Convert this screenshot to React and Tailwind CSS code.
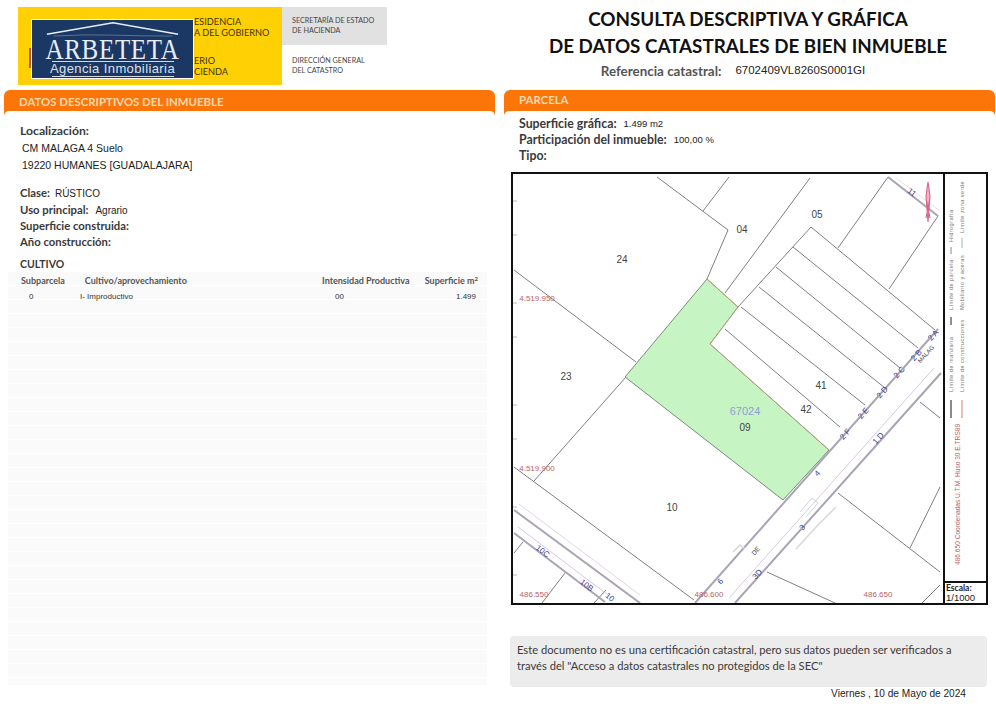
const lato = "font-['Lato','Open_Sans',sans-serif]";
const arial = "font-['Liberation_Sans',Arial,sans-serif]";

const thin = [
  [657, 177, 728, 230], [703, 211, 729, 177], [728, 230, 707, 279],
  [514, 270, 636, 362], [725, 293, 810, 178],
  [811, 227, 738, 307], [811, 227, 935, 330], [793, 247, 918, 348],
  [776, 267, 900, 368], [759, 287, 885, 388], [741, 307, 865, 405],
  [725, 329, 840, 427], [888, 177, 838, 248], [938, 216, 889, 289],
  [534, 481, 626, 377], [514, 467, 694, 600],
  [920, 402, 940, 418], [838, 493, 940, 572], [940, 487, 910, 548],
  [767, 572, 835, 603], [940, 585, 922, 603],
  [514, 553, 523, 542], [542, 603, 565, 573], [594, 603, 606, 590],
];

const streets = [
  [938, 329, 695, 603],
  [941, 373, 735, 603],
  [514, 510, 640, 603],
  [514, 533, 605, 602],
  [888, 177, 938, 216],
];

const parcelLabels = [
  ["04", 742, 233], ["05", 817, 218], ["24", 622, 263], ["23", 566, 380],
  ["41", 821, 389], ["42", 806, 413], ["09", 745, 431], ["10", 672, 511],
];

const coords = [
  ["4.519.950", 537, 301], ["4.519.900", 537, 471],
  ["486.550", 534, 597], ["486.600", 709, 597], ["486.650", 878, 597],
];

const numbers = [
  ["11", 912, 195], ["2 A", 933, 338], ["2 B", 916, 358], ["2 C", 899, 375],
  ["2 D", 882, 395], ["2 E", 863, 416], ["2 F", 845, 437], ["4", 817, 476],
  ["1 D", 878, 441], ["3", 802, 530], ["3D", 757, 577], ["6", 720, 584],
  ["10C", 543, 554], ["10B", 587, 588], ["10", 610, 600],
];

const legend = [
  ["Límite de manzana", 953, 392], ["Límite de parcela", 953, 310], ["Hidrografía", 953, 242],
  ["Límite de construcciones", 964, 392], ["Mobiliario y aceras", 964, 310], ["Límite zona verde", 964, 233],
];

function CadastralMap() {
  return (
    <svg viewBox="513 174 430 429" className="block h-full w-full">
      {thin.map(([x1, y1, x2, y2], i) => (
        <line key={i} x1={x1} y1={y1} x2={x2} y2={y2} stroke="#484848" strokeWidth="0.7" />
      ))}
      <polygon
        points="707,279 738,307 710,344 829,450 783,500 625,377"
        fill="#c6f5c3"
        stroke="#4d5d4d"
        strokeWidth="0.7"
      />
      <polyline points="707,279 738,307 710,344 829,450" fill="none" stroke="#c9a27c" strokeWidth="0.7" />
      {streets.map(([x1, y1, x2, y2], i) => (
        <line key={i} x1={x1} y1={y1} x2={x2} y2={y2} stroke="#a9a4b4" strokeWidth="2" />
      ))}
      <line x1="934" y1="368" x2="729" y2="598" stroke="#d9c8e4" strokeWidth="1" />
      <line x1="519" y1="504" x2="640" y2="595" stroke="#e3d3ea" strokeWidth="1" />
      <line x1="518" y1="527" x2="612" y2="598" stroke="#d9c8e4" strokeWidth="1" />
      <line x1="896" y1="178" x2="940" y2="211" stroke="#d8d8d8" strokeWidth="0.7" />
      <polyline points="800,512 812,498 818,503 806,517" fill="none" stroke="#d4d4d4" strokeWidth="1" />
      <polyline points="796,549 818,525 836,507" fill="none" stroke="#d8d8d8" strokeWidth="1.5" />
      <polyline points="733,552 740,545 745,549" fill="none" stroke="#d8d8d8" strokeWidth="1.5" />
      <path d="M928 182 L930 196 L928 222 L926 196 Z M926 218 L930 198 M930 218 L926 198" fill="#efb6c9" stroke="#d9648a" strokeWidth="1.1" />
      {[201, 235, 303, 337, 405, 439, 507, 575].map((y) => (
        <line key={y} x1="513" y1={y} x2="517" y2={y} stroke="#aaa" strokeWidth="0.8" />
      ))}
      <g fontFamily="Liberation Sans, Arial, sans-serif">
        {parcelLabels.map(([t, x, y]) => (
          <text key={t} x={x} y={y} textAnchor="middle" fontSize="10" fill="#444">{t}</text>
        ))}
        <text x="745" y="415" textAnchor="middle" fontSize="11" fill="#8e9ed0">67024</text>
        {coords.map(([t, x, y]) => (
          <text key={t} x={x} y={y} textAnchor="middle" fontSize="8" fill="#b8646a">{t}</text>
        ))}
        {numbers.map(([t, x, y]) => (
          <text key={t + x} x={x} y={y} textAnchor="middle" fontSize="8" fill="#3b3f96" transform={`rotate(${t === "11" || t.startsWith("10") ? 38 : -48} ${x} ${y - 3})`}>{t}</text>
        ))}
        <text x="926" y="356" textAnchor="middle" fontSize="6" fill="#444" transform="rotate(-48 926 354)">MALAG</text>
        <text x="756" y="553" textAnchor="middle" fontSize="6.5" fill="#444" transform="rotate(-48 756 551)">DE</text>
      </g>
    </svg>
  );
}

function Legend() {
  return (
    <svg viewBox="945 174 41 407" className="block h-full w-full">
      <g fontFamily="Liberation Sans, Arial, sans-serif" fontSize="5.6" fill="#777" textLength="0">
        {legend.map(([t, x, y]) => (
          <text key={t} x={x} y={y} fontSize="5.6" letterSpacing="0.45" transform={`rotate(-90 ${x} ${y})`}>{t}</text>
        ))}
        <text x="960" y="565" fontSize="6.6" fill="#b8646a" transform="rotate(-90 960 565)">486.650 Coordenadas U.T.M. Huso 30 E.TRS89</text>
      </g>
      <line x1="951" y1="400" x2="951" y2="418" stroke="#8a8a8a" strokeWidth="2" />
      <line x1="951" y1="317" x2="951" y2="325" stroke="#222" strokeWidth="1" />
      <line x1="951" y1="247" x2="951" y2="254" stroke="#8a8a8a" strokeWidth="1" />
      <line x1="962" y1="400" x2="962" y2="418" stroke="#c9866a" strokeWidth="1" />
      <line x1="962" y1="238" x2="962" y2="248" stroke="#9ab99a" strokeWidth="1" />
    </svg>
  );
}

function Logo() {
  return (
    <div className="absolute left-[13px] top-[12px] flex h-[60px] w-[163px] flex-col items-center border border-white bg-[#1b3763]">
      <svg viewBox="0 0 161 18" className="h-[17px] w-full shrink-0">
        <polyline points="11,15 81,3 150,15" fill="none" stroke="#e8edf3" strokeWidth="1.6" />
        <path d="M18 17 Q50 15 81 16 T144 17" fill="none" stroke="#8fa0b8" strokeWidth="0.6" />
      </svg>
      <div className="h-[24px] scale-y-[1.2] text-[25px] leading-[24px] tracking-[0.7px] text-[#e9eef5] font-['Liberation_Serif',serif]">ARBETETA</div>
      <div className="h-px w-[122px] bg-[#d4dae4]" />
      <div className={`${arial} h-[14px] text-[13px] leading-[14px] tracking-[0.4px] text-[#dbe2ec]`}>Agencia Inmobiliaria</div>
      <div className="h-px w-[122px] bg-[#d4dae4]" />
    </div>
  );
}

function PanelHead({ title, className = "" }) {
  return (
    <div className="flex h-[26px] shrink-0 flex-col rounded-t-[6px] bg-[#fb7508]">
      <div className={`${lato} flex h-[21px] items-center pl-[15px] text-[11.4px] font-bold text-[#fbd9ae] ${className}`}>
        {title}
      </div>
      <div className="h-[5px] rounded-t-[5px] bg-white" />
    </div>
  );
}

function Label({ children, className = "text-[11.3px]" }) {
  return <span className={`${lato} font-bold text-[#3a3a3a] ${className}`}>{children}</span>;
}

function Value({ children, className = "text-[10px]" }) {
  return <span className={`${arial} text-[#222] ${className}`}>{children}</span>;
}

function Row({ children, className = "h-[16px]", gap = "gap-[5px]" }) {
  return <div className={`flex items-center whitespace-nowrap ${gap} ${className}`}>{children}</div>;
}

export default function App() {
  return (
    <div className="flex h-[709px] w-[996px] flex-col overflow-hidden bg-white">
      <header className="flex h-[90px] shrink-0">
        <div className="flex w-[500px] shrink-0 pl-[18px] pt-[7px]">
          <div className={`${lato} relative flex h-[78px] w-[264px] flex-col bg-[#ffd105] pl-[176px] pt-[9px] text-[9.2px] leading-[11px] text-[#3d3300]`}>
            <div>ESIDENCIA</div>
            <div className="whitespace-nowrap">A DEL GOBIERNO</div>
            <div className="mt-[17px]">ERIO</div>
            <div>CIENDA</div>
            <div className="absolute left-[11px] top-[41px] h-[20px] w-[2px] bg-[#c8501e]" />
            <Logo />
          </div>
          <div className={`${lato} w-[105px] text-[7.2px] leading-[10px] text-[#444]`}>
            <div className="flex h-[38px] items-center bg-[#e1e1e1] pl-[10px]">
              <div>SECRETARÍA DE ESTADO<br />DE HACIENDA</div>
            </div>
            <div className="pl-[10px] pt-[11px]">DIRECCIÓN GENERAL<br />DEL CATASTRO</div>
          </div>
        </div>
        <div className={`${lato} flex-1 pt-[6px] text-center font-bold text-[#111]`}>
          <div className="text-[18.8px] leading-[25px]">CONSULTA DESCRIPTIVA Y GRÁFICA</div>
          <div className="text-[18.8px] leading-[29px]">DE DATOS CATASTRALES DE BIEN INMUEBLE</div>
          <div className="mt-[3px] flex h-[16px] items-center justify-center gap-[14px] pr-[30px]">
            <span className="text-[13.4px] text-[#555]">Referencia catastral:</span>
            <span className={`${arial} text-[11.5px] font-normal text-[#222]`}>6702409VL8260S0001GI</span>
          </div>
        </div>
      </header>

      <div className="flex min-h-0 flex-1 gap-[9px] pl-[4px] pr-px">
        <section className="flex w-[491px] shrink-0 flex-col">
          <PanelHead title="DATOS DESCRIPTIVOS DEL INMUEBLE" className="pt-[3px]" />
          <div className="px-[16px] pt-[7px]">
            <Row><Label className="text-[12.2px]">Localización:</Label></Row>
            <div className="pl-[2px] pt-[1px]">
              <Row className="h-[17px]"><Value className="text-[10.5px]">CM MALAGA 4 Suelo</Value></Row>
              <Row className="h-[17px]"><Value className="text-[10.5px]">19220 HUMANES [GUADALAJARA]</Value></Row>
            </div>
            <Row className="mt-[11px] h-[16px]"><Label>Clase:</Label><Value>RÚSTICO</Value></Row>
            <Row className="mt-px h-[16px]" gap="gap-[7px]"><Label>Uso principal:</Label><Value>Agrario</Value></Row>
            <Row><Label>Superficie construida:</Label></Row>
            <Row><Label>Año construcción:</Label></Row>
            <Row className="mt-[8px] h-[14px]"><Label className="text-[10.5px]">CULTIVO</Label></Row>
          </div>
          <div className="ml-[4px] flex h-[413px] w-[479px] flex-col bg-[repeating-linear-gradient(to_bottom,#fafafa_0px,#fafafa_13px,#ffffff_13px,#ffffff_14px)] pl-[13px]">
            <div className={`${lato} flex h-[17px] items-center text-[9px] font-bold text-[#555]`}>
              <span className="w-[64px]">Subparcela</span>
              <span className="w-[238px]">Cultivo/aprovechamiento</span>
              <span className="w-[103px] whitespace-nowrap">Intensidad Productiva</span>
              <span className="flex-1 whitespace-nowrap pr-[9px] text-right">Superficie m<sup className="text-[6px]">2</sup></span>
            </div>
            <div className={`${arial} flex h-[15px] items-center text-[8px] text-[#333]`}>
              <span className="w-[59px] pl-[8px]">0</span>
              <span className="w-[255px]">I- Improductivo</span>
              <span className="w-[100px]">00</span>
              <span className="flex-1 pr-[11px] text-right">1.499</span>
            </div>
          </div>
        </section>

        <section className="flex w-[491px] shrink-0 flex-col">
          <PanelHead title="PARCELA" className="pb-px" />
          <div className="pl-[15px]">
            <Row gap="gap-[7px]"><Label className="text-[12.3px]">Superficie gráfica:</Label><Value className="text-[9.5px]">1.499 m2</Value></Row>
            <Row gap="gap-[7px]"><Label className="text-[12.3px]">Participación del inmueble:</Label><Value className="text-[9.5px]">100,00 %</Value></Row>
            <Row><Label className="text-[12.3px]">Tipo:</Label></Row>
          </div>
          <div className="ml-[7px] mt-[8px] flex h-[433px] w-[477px] border-2 border-[#111]">
            <div className="min-w-0 flex-1"><CadastralMap /></div>
            <div className="flex w-[43px] shrink-0 flex-col border-l-2 border-[#111]">
              <div className="min-h-0 flex-1"><Legend /></div>
              <div className="flex h-[22px] shrink-0 flex-col justify-center border-t-2 border-[#111] pl-[1px] text-[#222]">
                <div className={`${lato} text-[8.5px] font-bold leading-[9px]`}>Escala:</div>
                <div className={`${arial} text-[9.5px] leading-[10px]`}>1/1000</div>
              </div>
            </div>
          </div>
          <div className={`${lato} ml-[6px] mt-[31px] h-[51px] w-[477px] shrink-0 rounded-[4px] bg-[#ececec] px-[7px] pt-[6px] text-[11.2px] leading-[16px] text-[#3a3a3a]`}>
            Este documento no es una certificación catastral, pero sus datos pueden ser verificados a través del "Acceso a datos catastrales no protegidos de la SEC"
          </div>
          <div className={`${arial} mr-[29px] mt-px text-right text-[10.15px] leading-[12px] text-[#222]`}>Viernes , 10 de Mayo de 2024</div>
        </section>
      </div>
    </div>
  );
}
